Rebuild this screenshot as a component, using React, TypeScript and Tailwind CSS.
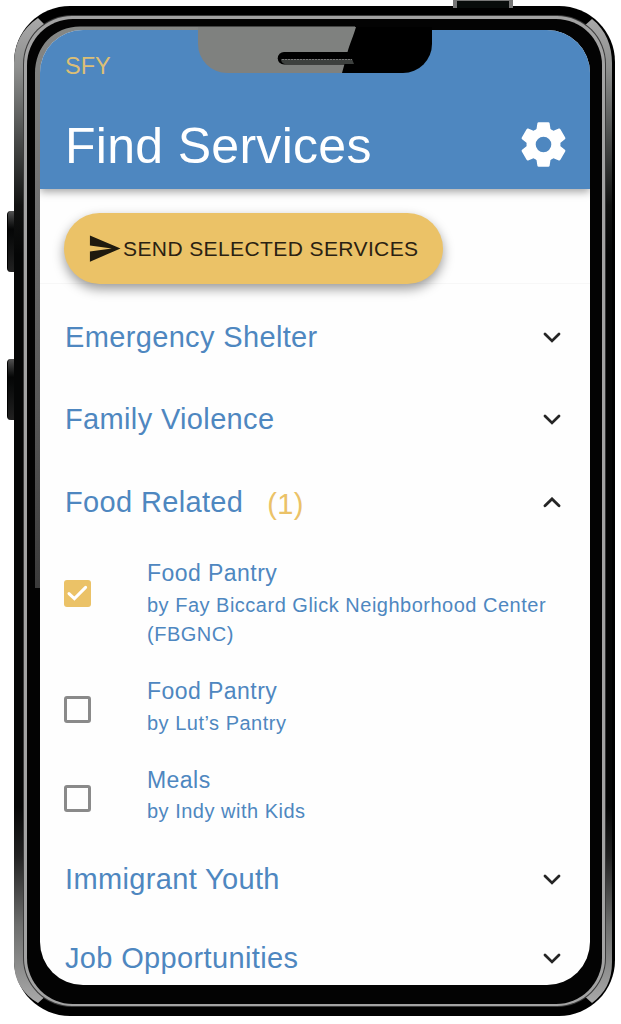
import { MdSend } from "react-icons/md";

interface Service {
  name: string;
  provider: string;
  checked: boolean;
}

interface CategoryProps {
  title: string;
  count?: number;
  open?: boolean;
}

const services: Service[] = [
  { name: "Food Pantry", provider: "Fay Biccard Glick Neighborhood Center (FBGNC)", checked: true },
  { name: "Food Pantry", provider: "Lut’s Pantry", checked: false },
  { name: "Meals", provider: "Indy with Kids", checked: false },
];

const Chevron = ({ up }: { up?: boolean }) => (
  <svg className="mr-[9px] h-[11px] w-[18px]" viewBox="0 0 18 11" fill="none">
    <path
      d={up ? "M2 8.8 L9 1.9 L16 8.8" : "M2 2 L9 8.9 L16 2"}
      stroke="#252525"
      strokeWidth="2.8"
      strokeLinecap="round"
    />
  </svg>
);

const Gear = () => (
  <svg className="mb-0.5 mr-[4px] size-[45px] text-white" viewBox="-22.5 -22.5 45 45" fill="currentColor">
    <circle r="12.2" fill="none" stroke="currentColor" strokeWidth="8.8" />
    {[0, 60, 120, 180, 240, 300].map((angle) => (
      <path
        key={angle}
        transform={`rotate(${angle})`}
        d="M-4.8 -22.3 H4.8 Q5.9 -22.3 6.1 -21.2 L7 -15.6 L9 -14 L5 -11 H-5 L-9 -14 L-7 -15.6 L-6.1 -21.2 Q-5.9 -22.3 -4.8 -22.3 Z"
      />
    ))}
  </svg>
);

const Category = ({ title, count, open }: CategoryProps) => (
  <div className="flex h-[82.5px] shrink-0 items-center justify-between pl-[25px] pr-5">
    <h2 className="mb-px flex items-center text-[29px] leading-9 tracking-[0.35px] text-[#4e87c0]">
      {title}
      {count && <span className="ml-6 mt-1 text-[#ebc267]">({count})</span>}
    </h2>
    <Chevron up={open} />
  </div>
);

const ServiceItem = ({ service }: { service: Service }) => (
  <li className="flex items-center pb-[27px] pl-6 pr-8">
    {service.checked ? (
      <svg className="mb-[21px] h-[27px] w-[27px] shrink-0 rounded-[3px] bg-[#ebc267]" viewBox="0 0 27 27">
        <path
          d="M5 13.6 L10.4 18.6 L21.6 7.4"
          fill="none"
          stroke="#fff"
          strokeWidth="3"
          strokeLinecap="round"
        />
      </svg>
    ) : (
      <div className="mt-[5px] size-[27px] shrink-0 rounded-[3px] border-3 border-[#8a8a8a]" />
    )}
    <div className="ml-[56px] text-[#4e87c0]">
      <h3 className="-mt-[1.5px] mb-[1.5px] text-[23px] leading-8 tracking-[0.45px]">{service.name}</h3>
      <p className="text-[20px] leading-[29.5px] tracking-[0.5px]">by {service.provider}</p>
    </div>
  </li>
);

// metal edges and glare that sit on the phone body
const BodyShine = () => (
  <svg className="absolute left-0 top-0" width="621" height="1024" viewBox="0 0 621 1024">
    <defs>
      <linearGradient id="edge" gradientUnits="userSpaceOnUse" x1="0" y1="18" x2="0" y2="1004">
        <stop offset="0" stopColor="#a9a9a9" />
        <stop offset="0.05" stopColor="#8f908f" />
        <stop offset="0.12" stopColor="#4c4e4d" />
        <stop offset="0.19" stopColor="#111211" />
        <stop offset="0.24" stopColor="#050606" />
        <stop offset="0.8" stopColor="#050606" />
        <stop offset="0.85" stopColor="#222" />
        <stop offset="0.92" stopColor="#6d6e6d" />
        <stop offset="1" stopColor="#a9a9a9" />
      </linearGradient>
    </defs>
    <path
      d="M38 18 C22 29 14 44 14 63 V962 C14 981 23 994 38 1003 L48 994 L36 960 V70 L46 26 Z"
      fill="url(#edge)"
    />
    <path
      d="M592 19 C606 30 612 46 612 63 V962 C612 981 605 993 592 1003 L582 994 L595 960 V70 L583 27 Z"
      fill="url(#edge)"
    />
  </svg>
);

const InnerGlare = () => (
  <svg className="absolute left-0 top-0" width="575" height="984" viewBox="27 19 575 984">
    <defs>
      <linearGradient id="glare" gradientUnits="userSpaceOnUse" x1="0" y1="27" x2="0" y2="588">
        <stop offset="0" stopColor="#858785" />
        <stop offset="0.25" stopColor="#757575" />
        <stop offset="0.7" stopColor="#555" />
        <stop offset="1" stopColor="#3b3b3b" />
      </linearGradient>
    </defs>
    <path d="M355 26.5 H80 C54 26.5 35 46 35 74 V588 H60 V60 H355 Z" fill="url(#glare)" />
  </svg>
);

const Notch = () => (
  <svg
    className="absolute left-[198px] top-[27px] z-20"
    width="234"
    height="46"
    viewBox="198 27 234 46"
  >
    <path d="M340 27 H432 V44 A29 29 0 0 1 403 73 H340 Z" fill="#000" />
    <path
      d="M198 27 H356 C352 40 348 48 347 55 L342 73 H227 A29 29 0 0 1 198 44 Z"
      fill="#7f817f"
    />
    <path d="M284 52 H354 V64.5 H284 A6.2 6.2 0 0 1 284 52 Z" fill="#000" />
    <path d="M281 59 H352 L354 64 H286 C283 64 281 62 281 59 Z" fill="#3d403e" />
    <path d="M282 59.5 H352" stroke="#777" strokeDasharray="2 1" />
  </svg>
);

const App = () => {
  return (
    <div className="relative h-[1024px] w-[621px] overflow-hidden bg-white pl-[14px] pt-[6px] font-['Liberation_Sans',Arial,sans-serif]">
      {/* hardware buttons */}
      <div className="absolute left-[453px] top-0 h-2 w-[60px] border-x-4 border-t border-[#777] bg-[#080c0b]" />
      <div className="absolute left-[7px] top-[211px] h-[61px] w-2 rounded-l-sm border-l border-black bg-linear-to-b from-[#555] via-[#050606] via-30% to-[#222]" />
      <div className="absolute left-[7px] top-[359px] h-[61px] w-2 rounded-l-sm border-l border-black bg-linear-to-b from-[#555] via-[#050606] via-30% to-[#222]" />

      <div className="h-[1010px] w-[601px] rounded-[56px] bg-black p-[10px] pr-[10.5px]">
        <BodyShine />
        <div className="relative h-full rounded-[48px] bg-[#a3a3a3] p-[2.5px] shadow-[0_0_0_1px_#3a3a3a]">
          <div className="relative h-full overflow-hidden rounded-[46px] bg-[#030303] pb-[18.5px] pl-[13.5px] pr-[12px] pt-[11.5px]">
            <InnerGlare />
            <main className="relative flex h-full flex-col overflow-hidden rounded-[43px] bg-[#fefefe]">
              <header className="z-10 h-[159px] shrink-0 bg-[#4e87c0] pl-[25px] pr-5 pt-[21.5px] shadow-[0_3px_8px_rgba(0,0,0,0.35)]">
                <div className="text-[23.5px] leading-7 text-[#dcbf76]">SFY</div>
                <div className="mt-[38px] flex items-center justify-between">
                  <h1 className="text-[50px] leading-[56px] tracking-[0.3px] text-white">
                    Find Services
                  </h1>
                  <Gear />
                </div>
              </header>

              <div className="h-[95px] shrink-0 border-b border-[#f7f7f7] pl-6 pt-6">
                <button className="flex h-[71px] w-[379px] items-center rounded-full bg-[#ebc267] pl-[23px] text-[21px] tracking-[0.4px] whitespace-nowrap text-[#2a2112] shadow-[0_5px_12px_rgba(0,0,0,0.4)]">
                  <MdSend className="mr-px size-[35px] shrink-0 text-[#1f1a0e]" />
                  SEND SELECTED SERVICES
                </button>
              </div>

              <div className="flex flex-col pt-3">
                <Category title="Emergency Shelter" />
                <Category title="Family Violence" />
                <Category title="Food Related" count={1} open />
                <ul className="mt-[15px]">
                  {services.map((service, index) => (
                    <ServiceItem key={index} service={service} />
                  ))}
                </ul>
                <div className="-mt-[15px]">
                  <Category title="Immigrant Youth" />
                </div>
                <div className="-mt-1">
                  <Category title="Job Opportunities" />
                </div>
              </div>
            </main>
          </div>
        </div>
      </div>
      <Notch />
    </div>
  );
};

export default App;
